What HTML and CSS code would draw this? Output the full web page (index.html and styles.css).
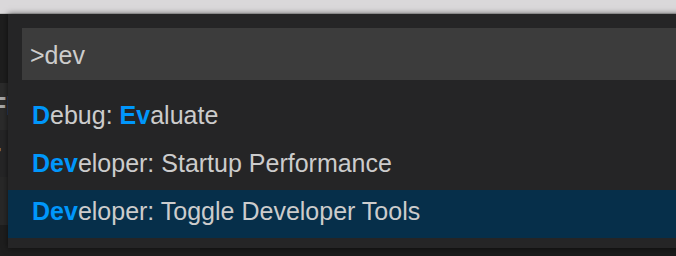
FILE: index.html
```html
<!DOCTYPE html>
<html lang="en">
<head>
    <meta charset="UTF-8">
    <meta name="viewport" content="width=device-width, initial-scale=1.0">
    <title>Command Palette</title>
    <link rel="stylesheet" href="styles.css">
</head>
<body>
    <div class="titlebar"></div>
    <div class="workbench">
        <aside class="sidebar">
            <div class="side-head"></div>
            <div class="side-row active"><span>Fl</span></div>
            <div class="side-row"><span>r</span></div>
            <div class="side-row alt"></div>
            <div class="side-foot"></div>
        </aside>
        <section class="editor">
            <div class="editor-line">
                <span class="tok tok-a">g</span>
                <span class="tok tok-b">rum</span>
            </div>
        </section>
    </div>

    <div class="quick-open">
        <div class="quick-input">&gt;dev</div>
        <ul class="quick-list">
            <li class="quick-item"><b>D</b>ebug: <b>Ev</b>aluate</li>
            <li class="quick-item"><b>Dev</b>eloper: Startup Performance</li>
            <li class="quick-item selected"><b>Dev</b>eloper: Toggle Developer Tools</li>
        </ul>
    </div>
</body>
</html>
```

FILE: styles.css
```css
body {
    margin: 0;
    width: 676px;
    height: 256px;
    overflow: hidden;
    background-color: #1e1e1e;
    font-family: "Liberation Sans", Arial, sans-serif;
    position: relative;
}
.titlebar {
    height: 13px;
    background-color: #dad8da;
    border-bottom: 1px solid #bcbcbc;
}
.workbench {
    display: flex;
    height: 242px;
}
.sidebar {
    width: 200px;
    display: flex;
    flex-direction: column;
    background-color: #252526;
    color: #a8a8a8;
    font-size: 25px;
}
.side-head {
    height: 69px;
    background-color: #1e1e1e;
}
.side-row {
    height: 47px;
    line-height: 47px;
    overflow: hidden;
}
.side-row span {
    margin-left: -9px;
    font-weight: bold;
}
.side-row.active {
    background-color: #2b2b2b;
}
.side-row.alt {
    height: 48px;
    background-color: #282828;
}
.side-foot {
    flex: 1;
    background-color: #1e1e1e;
}
.editor {
    flex: 1;
    background-color: #1b1b1b;
    padding-top: 234px;
    overflow: hidden;
}
.editor-line {
    position: relative;
    height: 30px;
    font-size: 25px;
    color: #8a8a8a;
}
.tok-a {
    margin-left: 220px;
}
.tok-b {
    margin-left: 190px;
}
.quick-open {
    position: absolute;
    top: 14px;
    left: 8px;
    right: -20px;
    height: 234px;
    box-sizing: border-box;
    padding: 14px 0 10px 0;
    background-color: #252526;
    box-shadow: 0 0 6px rgba(0, 0, 0, 0.6);
}
.quick-input {
    margin-left: 14px;
    height: 52px;
    box-sizing: border-box;
    padding: 2px 0 0 8px;
    line-height: 50px;
    background-color: #3c3c3c;
    color: #cccccc;
    font-size: 25px;
}
.quick-list {
    list-style: none;
    margin: 14px 0 0 0;
    padding: 0;
}
.quick-item {
    height: 48px;
    box-sizing: border-box;
    padding: 0 0 5px 24px;
    line-height: 43px;
    color: #cccccc;
    font-size: 25px;
    white-space: nowrap;
}
.quick-item b {
    color: #0097fb;
}
.quick-item.selected {
    background-color: #062f4a;
}
```
